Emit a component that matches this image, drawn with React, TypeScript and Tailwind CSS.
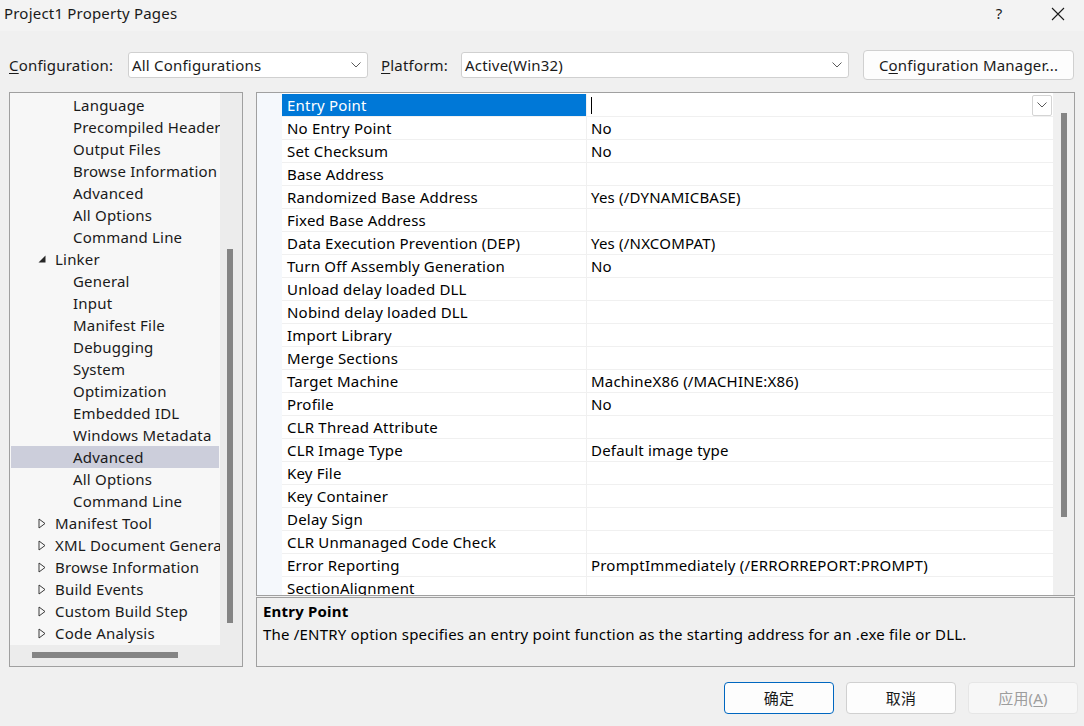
import React from 'react';

type TreeItem = { label: string; level: 1 | 2; state?: 'open' | 'closed'; selected?: boolean };

const treeItems: TreeItem[] = [
  { label: 'Language', level: 2 },
  { label: 'Precompiled Headers', level: 2 },
  { label: 'Output Files', level: 2 },
  { label: 'Browse Information', level: 2 },
  { label: 'Advanced', level: 2 },
  { label: 'All Options', level: 2 },
  { label: 'Command Line', level: 2 },
  { label: 'Linker', level: 1, state: 'open' },
  { label: 'General', level: 2 },
  { label: 'Input', level: 2 },
  { label: 'Manifest File', level: 2 },
  { label: 'Debugging', level: 2 },
  { label: 'System', level: 2 },
  { label: 'Optimization', level: 2 },
  { label: 'Embedded IDL', level: 2 },
  { label: 'Windows Metadata', level: 2 },
  { label: 'Advanced', level: 2, selected: true },
  { label: 'All Options', level: 2 },
  { label: 'Command Line', level: 2 },
  { label: 'Manifest Tool', level: 1, state: 'closed' },
  { label: 'XML Document Generator', level: 1, state: 'closed' },
  { label: 'Browse Information', level: 1, state: 'closed' },
  { label: 'Build Events', level: 1, state: 'closed' },
  { label: 'Custom Build Step', level: 1, state: 'closed' },
  { label: 'Code Analysis', level: 1, state: 'closed' },
];

const props: [string, string][] = [
  ['Entry Point', ''],
  ['No Entry Point', 'No'],
  ['Set Checksum', 'No'],
  ['Base Address', ''],
  ['Randomized Base Address', 'Yes (/DYNAMICBASE)'],
  ['Fixed Base Address', ''],
  ['Data Execution Prevention (DEP)', 'Yes (/NXCOMPAT)'],
  ['Turn Off Assembly Generation', 'No'],
  ['Unload delay loaded DLL', ''],
  ['Nobind delay loaded DLL', ''],
  ['Import Library', ''],
  ['Merge Sections', ''],
  ['Target Machine', 'MachineX86 (/MACHINE:X86)'],
  ['Profile', 'No'],
  ['CLR Thread Attribute', ''],
  ['CLR Image Type', 'Default image type'],
  ['Key File', ''],
  ['Key Container', ''],
  ['Delay Sign', ''],
  ['CLR Unmanaged Code Check', ''],
  ['Error Reporting', 'PromptImmediately (/ERRORREPORT:PROMPT)'],
  ['SectionAlignment', ''],
];

const Chevron = () => (
  <svg width="10" height="6" viewBox="0 0 10 6">
    <path d="M0.5 0.5 L5 5 L9.5 0.5" fill="none" stroke="#5a5a5a" strokeWidth="1" />
  </svg>
);

const Combo = ({ value, width }: { value: string; width: string }) => (
  <div className={`${width} h-[26px] bg-white border border-[#d0d0d0] rounded-[3px] flex items-center pl-[3px] pr-[6px]`}>
    <span className="flex-1 whitespace-nowrap">{value}</span>
    <Chevron />
  </div>
);

const TreeRow = ({ item }: { item: TreeItem }) => (
  <div
    className={`h-[22px] flex items-center whitespace-nowrap mx-[1px] ${item.selected ? 'bg-[#cccedb]' : ''} ${
      item.level === 2 ? 'pl-[62px]' : 'pl-[27px]'
    }`}
  >
    {item.level === 1 && (
      <span className="w-[17px] shrink-0 flex items-center">
        {item.state === 'open' ? (
          <svg width="8" height="8" viewBox="0 0 8 8">
            <path d="M7.5 0.5 L7.5 7.5 L0.5 7.5 Z" fill="#262626" />
          </svg>
        ) : (
          <svg width="8" height="11" viewBox="0 0 8 11">
            <path d="M1 1 L7 5.5 L1 10 Z" fill="none" stroke="#3a3a3a" strokeWidth="1" />
          </svg>
        )}
      </span>
    )}
    <span className="shrink-0">{item.label}</span>
  </div>
);

const Button = ({ children, kind }: { children: React.ReactNode; kind: 'default' | 'normal' | 'disabled' }) => (
  <div
    className={`w-[110px] h-[32px] rounded-[4px] border flex items-center justify-center ${
      kind === 'default'
        ? 'border-[#0067c0] bg-[#fdfdfd] text-[#1a1a1a]'
        : kind === 'normal'
        ? 'border-[#d0d0d0] bg-[#fdfdfd] text-[#1a1a1a]'
        : 'border-[#e6e6e6] bg-[#f7f7f7] text-[#9d9d9d]'
    }`}
  >
    {children}
  </div>
);

export default function App() {
  return (
    <div className="w-[1084px] h-[726px] bg-[#f0f0f0] text-[15px] tracking-[0.2px] text-[#1a1a1a] font-['Noto_Sans','Noto_Sans_CJK_SC',sans-serif] flex flex-col overflow-hidden select-none">
      {/* title bar */}
      <div className="h-[31px] bg-[#f3f3f3] flex items-center pl-[4px]">
        <span className="flex-1 pb-[4px]">Project1 Property Pages</span>
        <span className="w-[14px] text-center pb-[4px] mr-[45px]">?</span>
        <svg width="14" height="14" viewBox="0 0 14 14" className="mr-[19px] mb-[4px]">
          <path d="M1 1 L13 13 M13 1 L1 13" stroke="#1a1a1a" strokeWidth="1.1" />
        </svg>
      </div>

      {/* configuration row */}
      <div className="mt-[19px] h-[30px] flex items-center pl-[9px]">
        <span className="w-[119px]">
          <span className="underline underline-offset-2">C</span>onfiguration:
        </span>
        <Combo value="All Configurations" width="w-[240px]" />
        <span className="ml-[13px] w-[80px]">
          <span className="underline underline-offset-2">P</span>latform:
        </span>
        <Combo value="Active(Win32)" width="w-[388px]" />
        <div className="ml-[14px] w-[211px] h-[30px] bg-[#fdfdfd] border border-[#d0d0d0] rounded-[4px] flex items-center justify-center">
          <span>
            C<span className="underline underline-offset-2">o</span>nfiguration Manager...
          </span>
        </div>
      </div>

      {/* main panels */}
      <div className="mt-[12px] h-[575px] flex pl-[9px]">
        {/* tree */}
        <div className="w-[234px] h-full border border-[#a0a0a0] flex flex-col">
          <div className="flex flex-1 min-h-0">
            <div className="w-[210px] bg-[#f7f7f7] overflow-hidden pt-[1px]">
              {treeItems.map((it, i) => (
                <TreeRow key={i} item={it} />
              ))}
            </div>
            <div className="flex-1 bg-[#ececec] pt-[156px] pl-[7px]">
              <div className="w-[6px] h-[374px] bg-[#858585]" />
            </div>
          </div>
          <div className="h-[21px] bg-[#ececec] pt-[7px] pl-[22px]">
            <div className="w-[146px] h-[6px] bg-[#858585]" />
          </div>
        </div>

        {/* right column */}
        <div className="ml-[13px] w-[819px] flex flex-col">
          <div className="h-[504px] border border-[#a0a0a0] flex">
            <div className="w-[25px] bg-[#f5f8fc]" />
            <div className="w-[771px] bg-white overflow-hidden pt-[1px]">
              {props.map(([name, value], i) => (
                <div key={i} className="h-[23px] flex border-b border-[#f0f0f0] text-black">
                  <div
                    className={`w-[304px] pl-[5px] flex items-center whitespace-nowrap ${
                      i === 0 ? 'bg-[#0078d7] text-white' : ''
                    }`}
                  >
                    {name}
                  </div>
                  <div className="w-[1px] bg-[#f0f0f0]" />
                  <div className="flex-1 pl-[4px] flex items-center whitespace-nowrap">
                    {i === 0 ? (
                      <>
                        <div className="w-[1px] h-[17px] bg-black" />
                        <div className="flex-1" />
                        <div className="w-[20px] h-[21px] border border-[#d4d4d4] rounded-[2px] bg-white flex items-center justify-center mr-[1px]">
                          <Chevron />
                        </div>
                      </>
                    ) : (
                      value
                    )}
                  </div>
                </div>
              ))}
            </div>
            <div className="flex-1 bg-[#f0f0f0] pt-[20px] pl-[8px]">
              <div className="w-[6px] h-[404px] bg-[#858585]" />
            </div>
          </div>
          <div className="mt-[1px] h-[70px] border border-[#a0a0a0] pl-[6px] pt-[2px] leading-[23px] text-black">
            <div className="font-bold">Entry Point</div>
            <div>The /ENTRY option specifies an entry point function as the starting address for an .exe file or DLL.</div>
          </div>
        </div>
      </div>

      {/* buttons */}
      <div className="mt-[15px] flex justify-end gap-[12px] pr-[6px]">
        <Button kind="default">确定</Button>
        <Button kind="normal">取消</Button>
        <Button kind="disabled">
          <span>
            应用(<span className="underline underline-offset-2">A</span>)
          </span>
        </Button>
      </div>
    </div>
  );
}
